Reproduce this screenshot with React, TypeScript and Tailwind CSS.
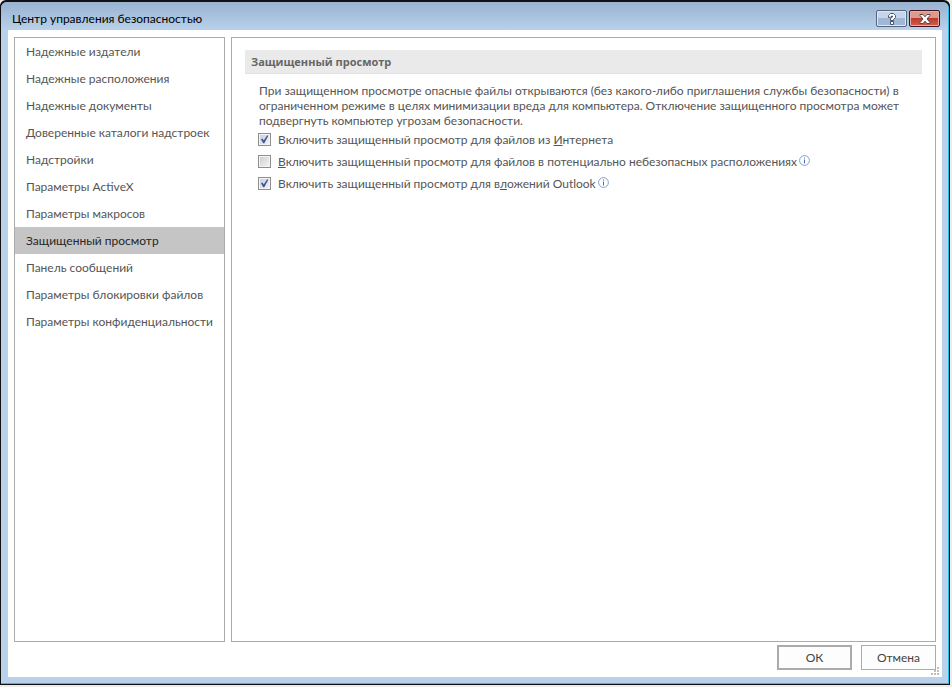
import { useState } from "react";
import type { ReactNode } from "react";

const sections = [
  "Надежные издатели",
  "Надежные расположения",
  "Надежные документы",
  "Доверенные каталоги надстроек",
  "Надстройки",
  "Параметры ActiveX",
  "Параметры макросов",
  "Защищенный просмотр",
  "Панель сообщений",
  "Параметры блокировки файлов",
  "Параметры конфиденциальности",
];

function InfoIcon() {
  return (
    <svg width="11" height="11" viewBox="0 0 11 11" className="mb-0.5 ml-0.5 shrink-0" aria-hidden="true">
      <circle cx="5.5" cy="5.5" r="4.9" fill="#fff" stroke="#7f9fd6" />
      <path d="M5 2.5h1v1H5zM5 4.5h1v4H5z" fill="#4a6fb5" />
    </svg>
  );
}

type OptionProps = {
  id: string;
  initial: boolean;
  info?: boolean;
  children: ReactNode;
};

function Option({ id, initial, info, children }: OptionProps) {
  const [checked, setChecked] = useState(initial);

  return (
    <div className="flex h-[22px] items-center">
      <span className="relative mr-[7px] flex size-[13px] shrink-0">
        <input
          id={id}
          type="checkbox"
          checked={checked}
          onChange={(e) => setChecked(e.target.checked)}
          className="size-[13px] appearance-none border border-[#8e8f8f] bg-linear-to-br from-[#c9cdd2] to-[#f6f6f6] shadow-[inset_0_0_0_1px_#f4f4f4]"
        />
        {checked && (
          <svg width="13" height="13" viewBox="0 0 13 13" className="pointer-events-none absolute inset-0" aria-hidden="true">
            <path d="M3 6.2 4.6 5.6 5.7 7.6 9 2.4 10.4 2.6 6.3 10.2H5.2z" fill="#3c549c" />
          </svg>
        )}
      </span>
      <label htmlFor={id} className="whitespace-nowrap">
        {children}
      </label>
      {info && <InfoIcon />}
    </div>
  );
}

export default function App() {
  const [active, setActive] = useState("Защищенный просмотр");

  return (
    <div className="h-screen bg-[#ececec] pr-[2px] pb-[2px] font-['Lato','Open_Sans',sans-serif] text-[12px] leading-[15px] text-[#555]">
      <div className="flex h-full flex-col rounded-t-md border border-t-2 border-[#111] bg-black">
        <div className="flex min-h-0 flex-1 flex-col rounded-t-md border-r border-b border-[#1fc3ea] bg-[#b9d1ea] pr-[6px] pb-[6px] pl-[7px]">
          {/* Заголовок окна */}
          <header className="-mr-[6px] -ml-[7px] flex h-7 shrink-0 items-start justify-between rounded-t-md bg-linear-to-b from-[#98b2d0] to-[#b9d1ea] pr-[8px] pl-[11px]">
            <h1 className="pt-[9px] text-black">Центр управления безопасностью</h1>
            <div className="flex gap-[2px] pt-[8px]">
              <button
                aria-label="Справка"
                className="flex h-[17px] w-[31px] items-center justify-center rounded-xs border border-[#56677f] bg-linear-to-b from-[#c5d6ea] from-50% to-[#9fb8d5] to-50% shadow-[inset_0_0_0_1px_#dbe7f4]"
              >
                <svg width="10" height="12" viewBox="0 0 10 12" aria-hidden="true">
                  <path d="M1.500 4.500V2.500l1-1 1-1h3l2 2v2l-2 2v1h-3v-2l2-1.500v-1h-1v1zM3.500 8.500h3v3h-3z" fill="#fff" stroke="#4b5568" />
                </svg>
              </button>
              <button
                aria-label="Закрыть"
                className="flex h-[17px] w-[31px] items-center justify-center rounded-xs border border-[#431422] bg-linear-to-b from-[#dc9a8c] from-45% via-[#bd3a2b] via-50% to-[#d0604c] shadow-[inset_0_0_0_1px_#e5aca0]"
              >
                <svg width="12" height="10" viewBox="0 0 12 10" aria-hidden="true">
                  <path d="M1 .5h3L6 2.8 8 .5h3v1L8 5l3 3.5v1H8L6 7.2 4 9.5H1v-1L4 5 1 1.5z" fill="#fff" stroke="#554752" />
                </svg>
              </button>
            </div>
          </header>

          <div className="flex min-h-0 flex-1 flex-col bg-white px-[6px] pt-[7px]">
            <div className="flex min-h-0 flex-1 gap-[6px]">
              {/* Список разделов */}
              <nav className="w-[211px] shrink-0 border border-[#ababab]">
                {sections.map((name) => (
                  <button
                    key={name}
                    onClick={() => setActive(name)}
                    className={
                      name === active
                        ? "block h-[27px] w-full bg-[#c5c5c5] pl-[11px] text-left whitespace-nowrap text-[#262626]"
                        : "block h-[27px] w-full pl-[11px] text-left whitespace-nowrap"
                    }
                  >
                    {name}
                  </button>
                ))}
              </nav>

              <main className="min-w-0 flex-1 border border-[#ababab] px-[13px] pt-3">
                <h2 className="border-b border-[#e0e0e0] bg-[#eaeaea] pt-1 pb-1 pl-[6px] font-['Open_Sans','Lato',sans-serif] text-[11px] font-bold text-[#666]">
                  Защищенный просмотр
                </h2>
                <p className="mt-[9px] ml-[14px]">
                  При защищенном просмотре опасные файлы открываются (без какого-либо приглашения службы безопасности) в
                  ограниченном режиме в целях минимизации вреда для компьютера. Отключение защищенного просмотра может
                  подвергнуть компьютер угрозам безопасности.
                </p>
                <div className="ml-[13px]">
                  <Option id="internet" initial={true}>
                    Включить защищенный просмотр для файлов из <u>И</u>нтернета
                  </Option>
                  <Option id="unsafe" initial={false} info>
                    <u>В</u>ключить защищенный просмотр для файлов в потенциально небезопасных расположениях
                  </Option>
                  <Option id="outlook" initial={true} info>
                    Включить защищенный просмотр для в<u>л</u>ожений Outlook
                  </Option>
                </div>
              </main>
            </div>

            <footer className="relative flex shrink-0 justify-end gap-[9px] pt-[3px] pb-[7px]">
              <button className="h-[25px] w-[75px] border-2 border-[#ababab] bg-[#fdfdfd] text-[#444]">ОК</button>
              <button className="h-[25px] w-[75px] border border-[#ababab] bg-[#fdfdfd] text-[#444]">Отмена</button>
              <svg width="9" height="9" viewBox="0 0 9 9" className="absolute -right-1 bottom-px" aria-hidden="true">
                <path d="M6 0h2v2H6zM3 3h2v2H3zM6 3h2v2H6zM0 6h2v2H0zM3 6h2v2H3zM6 6h2v2H6z" fill="#bdbdbd" />
              </svg>
            </footer>
          </div>
        </div>
      </div>
    </div>
  );
}
